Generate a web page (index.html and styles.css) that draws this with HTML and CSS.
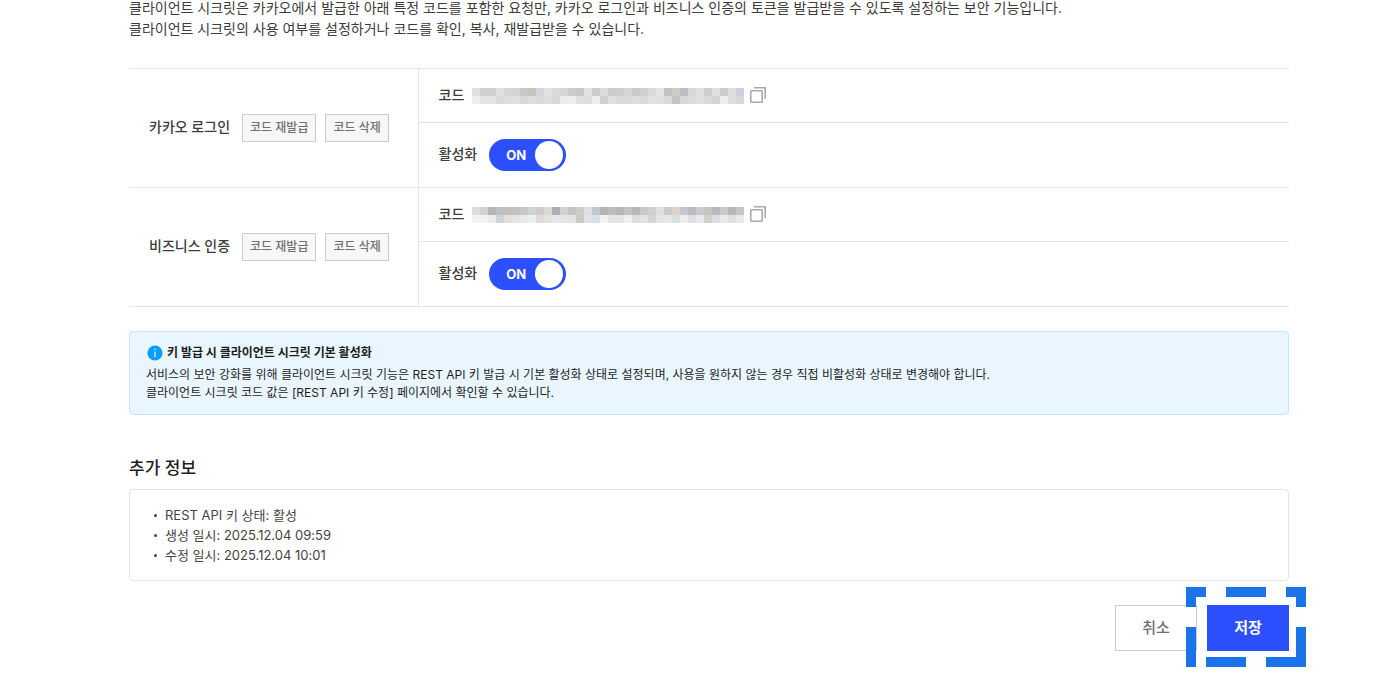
FILE: index.html
```html
<!DOCTYPE html>
<html lang="ko">
<head>
<meta charset="utf-8">
<title>클라이언트 시크릿</title>
<link rel="stylesheet" href="styles.css">
</head>
<body>
<main class="page">
  <p class="intro">클라이언트 시크릿은 카카오에서 발급한 아래 특정 코드를 포함한 요청만, 카카오 로그인과 비즈니스 인증의 토큰을 발급받을 수 있도록 설정하는 보안 기능입니다.<br>클라이언트 시크릿의 사용 여부를 설정하거나 코드를 확인, 복사, 재발급받을 수 있습니다.</p>

  <table class="secrets">
    <tbody>
      <tr class="code-row">
        <th rowspan="2" scope="rowgroup">
          <div class="secret-head">
            <span class="secret-name">카카오 로그인</span>
            <button type="button" class="btn-small">코드 재발급</button>
            <button type="button" class="btn-small">코드 삭제</button>
          </div>
        </th>
        <td>
          <div class="field">
            <span class="field-label">코드</span>
            <svg class="mask" data-mask="login" viewBox="0 0 272 16" aria-hidden="true"></svg>
            <button type="button" class="btn-copy" aria-label="코드 복사">
              <svg viewBox="0 0 16 16" aria-hidden="true"><path d="M4 .8H15.2V12"/><rect x=".8" y="3.8" width="11.4" height="11.4" rx=".5"/></svg>
            </button>
          </div>
        </td>
      </tr>
      <tr class="active-row">
        <td>
          <div class="field">
            <label class="field-label" for="login-active">활성화</label>
            <span class="switch"><input type="checkbox" id="login-active" role="switch" checked><span class="switch-text">ON</span></span>
          </div>
        </td>
      </tr>
      <tr class="code-row">
        <th rowspan="2" scope="rowgroup">
          <div class="secret-head">
            <span class="secret-name">비즈니스 인증</span>
            <button type="button" class="btn-small">코드 재발급</button>
            <button type="button" class="btn-small">코드 삭제</button>
          </div>
        </th>
        <td>
          <div class="field">
            <span class="field-label">코드</span>
            <svg class="mask" data-mask="business" viewBox="0 0 272 16" aria-hidden="true"></svg>
            <button type="button" class="btn-copy" aria-label="코드 복사">
              <svg viewBox="0 0 16 16" aria-hidden="true"><path d="M4 .8H15.2V12"/><rect x=".8" y="3.8" width="11.4" height="11.4" rx=".5"/></svg>
            </button>
          </div>
        </td>
      </tr>
      <tr class="active-row">
        <td>
          <div class="field">
            <label class="field-label" for="business-active">활성화</label>
            <span class="switch"><input type="checkbox" id="business-active" role="switch" checked><span class="switch-text">ON</span></span>
          </div>
        </td>
      </tr>
    </tbody>
  </table>

  <section class="notice">
    <h3 class="notice-title">
      <svg class="notice-icon" viewBox="0 0 16 16" aria-hidden="true"><circle cx="8" cy="8" r="7.6" fill="#0a9eff"/><path d="M8 6.6V12M8 3.8V5.2" stroke="#d9f0ff" stroke-width="1.3"/></svg>
      키 발급 시 클라이언트 시크릿 기본 활성화
    </h3>
    <p class="notice-text">서비스의 보안 강화를 위해 클라이언트 시크릿 기능은 REST API 키 발급 시 기본 활성화 상태로 설정되며, 사용을 원하지 않는 경우 직접 비활성화 상태로 변경해야 합니다.<br>클라이언트 시크릿 코드 값은 [REST API 키 수정] 페이지에서 확인할 수 있습니다.</p>
  </section>

  <h2 class="extra-title">추가 정보</h2>
  <ul class="extra">
    <li>REST API 키 상태: 활성</li>
    <li>생성 일시: 2025.12.04 09:59</li>
    <li>수정 일시: 2025.12.04 10:01</li>
  </ul>

  <div class="actions">
    <button type="button" class="btn btn-cancel">취소</button>
    <div class="save">
      <button type="button" class="btn btn-save">저장</button>
      <svg class="save-frame" viewBox="0 0 120 80" aria-hidden="true"><path d="M0 20V0H20V10H10V20ZM40 0H80V10H40ZM100 0H120V20H110V10H100ZM0 40H10V80H0ZM20 70H60V80H20ZM80 70H110V40H120V80H80Z"/></svg>
    </div>
  </div>
</main>
<script src="mask.js"></script>
</body>
</html>
```
FILE: mask.js
```js
// Colour cells of the masked codes: two rows of 8px squares each.
const masks = {
  login: [
    "e0e0df cfd0d1 cecfd0 e0dfdd d5d5d5 d2d4d6 c9c8c6 c7c2be d4d7da e1e2e0 dadada d5d5d6 cacbcd c7c7c6 e0e1e3 cdcbcd d9dbdf cbcbcb cecdc9 d5d5d5 cacaca cfcfcf d8d9da e3e3e3 c1c1c1 cccbc7 babdc6 d8d8d8 e0e0de cccdd0 e0dfde cdccca e1dcd8 cad0da",
    "eeeeee e2e3e3 e6e2dd d9dadb dededf dfe0e2 d9d7d7 dfdddb d8d9d9 dcddde d7d7d8 eaecee eeeeee e0e0e0 dddddd eeeeee cfd1d1 dfdfdf ddd9d6 dadada dddddd dbdad8 dfe2e4 dedfdf dbd9d6 c3c3c2 d8d8da dbdcdd dee0e0 d9d8da d4d4d5 ededec e2ddda d4d7de"
  ],
  business: [
    "dfdedd d2d2d2 b8b5b3 bdc0c3 c5beb9 bfc3c6 c9c6c4 cdd2d2 cccccf dbdbd5 aeadb3 d3d2d0 c1c4c8 d0cbc5 dfdfe1 bfc8d0 b8b4b1 b9bec1 b8b6b5 c4c2bf b8b8b7 c9c9cc d0d0d0 e0e0e0 c9cacc dcd3cd c5c7ce bbbdc0 cacbce c8c5c0 b9b9b9 c8c9ca b9b7b5 c4c5c7",
    "f2f2f2 f2f2f2 ececea d2d2d2 e2e1df e7e6e6 eaeaea ecefef dddcda e3e2e1 e5e7e9 e2e4e6 e5e2df c9c9ca e2e2e2 dce0e4 f2f2f2 e5e5e5 e6e5e3 eef0ef dedede e3e2e1 d4d4d4 e5e4e6 e6e6e5 dedfe0 ededec e0e0e2 e8e9ea d3d1ce dedfe0 e8e8e8 e0e0e2 e8e8e8"
  ]
};

document.querySelectorAll(".mask").forEach((svg) => {
  svg.innerHTML = masks[svg.dataset.mask]
    .map((row, y) => row.split(" ")
      .map((c, x) => `<rect x="${x * 8}" y="${y * 8}" width="8" height="8" fill="#${c}"/>`)
      .join(""))
    .join("");
});
```
FILE: styles.css
```css
* {
  box-sizing: border-box;
}

body {
  margin: 0;
  background: #fff;
  color: #3c3c3c;
  font-family: Inter, "Noto Sans CJK KR", sans-serif;
  font-size: 14px;
  line-height: 21px;
}

button {
  font-family: inherit;
  cursor: pointer;
}

.page {
  padding: 0 111px 32px 129px;
}

.intro {
  margin: -3px 0 29px;
}

/* Secret table */
.secrets {
  width: 100%;
  border-collapse: collapse;
  border-top: 1px solid #e5e5e5;
}

.secrets th,
.secrets td {
  padding: 0 20px;
  border-bottom: 1px solid #e5e5e5;
  text-align: left;
  vertical-align: middle;
}

.secrets th {
  width: 289px;
  border-right: 1px solid #e5e5e5;
  font-weight: 500;
}

.code-row {
  height: 54px;
}

.active-row {
  height: 65px;
}

.secret-head {
  display: flex;
  align-items: center;
  gap: 9px;
  white-space: nowrap;
}

.secret-name {
  padding: 0 3px 3px 0;
}

.btn-small {
  height: 28px;
  padding: 0 7px;
  border: 1px solid #ccc;
  background: #f7f7f7;
  color: #707070;
  font-size: 12px;
  font-weight: 500;
  line-height: 24px;
}

.field {
  display: flex;
  align-items: center;
}

.field-label {
  padding-bottom: 3px;
  font-weight: 500;
}

.mask {
  width: 272px;
  height: 16px;
  margin: 0 6px 0 8px;
}

.btn-copy {
  display: flex;
  padding: 0 0 1px;
  border: 0;
  background: none;
}

.btn-copy svg {
  width: 16px;
  height: 16px;
  fill: none;
  stroke: #aaa;
  stroke-width: 1.6;
}

.switch {
  position: relative;
  display: flex;
  margin-left: 12px;
}

.switch input {
  display: flex;
  align-items: center;
  justify-content: flex-start;
  width: 77px;
  height: 32px;
  margin: 0;
  padding: 0 3px;
  border-radius: 16px;
  background: #aaa;
  appearance: none;
  cursor: pointer;
}

.switch input:checked {
  justify-content: flex-end;
  background: #2d50ff;
}

.switch input::before {
  width: 28px;
  height: 28px;
  border-radius: 50%;
  background: #fff;
  content: "";
}

.switch-text {
  position: absolute;
  top: 0;
  left: 17px;
  color: #fff;
  font-size: 13px;
  font-weight: 700;
  line-height: 32px;
  pointer-events: none;
}

/* Notice */
.notice {
  margin-top: 24px;
  padding: 12px 16px;
  border: 1px solid #c0e7fd;
  border-radius: 4px;
  background: #e9f6ff;
  color: #1e1e1e;
  font-size: 12px;
  line-height: 18px;
}

.notice-title {
  display: flex;
  align-items: center;
  gap: 4px;
  margin: 0 0 4px;
  font-size: 12px;
  font-weight: 700;
}

.notice-icon {
  width: 16px;
  height: 16px;
  margin-left: 1px;
}

.notice-text {
  margin: 0;
}

/* Additional information */
.extra-title {
  margin: 41px 0 9px;
  color: #1e1e1e;
  font-size: 17px;
  font-weight: 500;
  line-height: 24px;
}

.extra {
  margin: 0;
  padding: 15px 24px;
  border: 1px solid #e5e5e5;
  border-radius: 4px;
  color: #444;
  font-size: 13px;
  line-height: 20px;
  list-style: none;
}

.extra li {
  display: flex;
  align-items: center;
  gap: 8px;
}

.extra li::before {
  width: 3px;
  height: 3px;
  border-radius: 50%;
  background: #444;
  content: "";
}

/* Form actions */
.actions {
  display: flex;
  justify-content: flex-end;
  gap: 10px;
  margin-top: 24px;
}

.btn {
  width: 82px;
  height: 46px;
  padding: 0 0 4px;
  font-size: 15px;
}

.btn-cancel {
  border: 1px solid #ccc;
  background: #fff;
  color: #707070;
  font-weight: 500;
}

.save {
  position: relative;
  display: flex;
}

.btn-save {
  border: 0;
  background: #2d50ff;
  color: #fff;
  font-weight: 700;
}

.save-frame {
  position: absolute;
  top: -18px;
  left: -21px;
  width: 120px;
  height: 80px;
  fill: #1a73e8;
  pointer-events: none;
}
```
